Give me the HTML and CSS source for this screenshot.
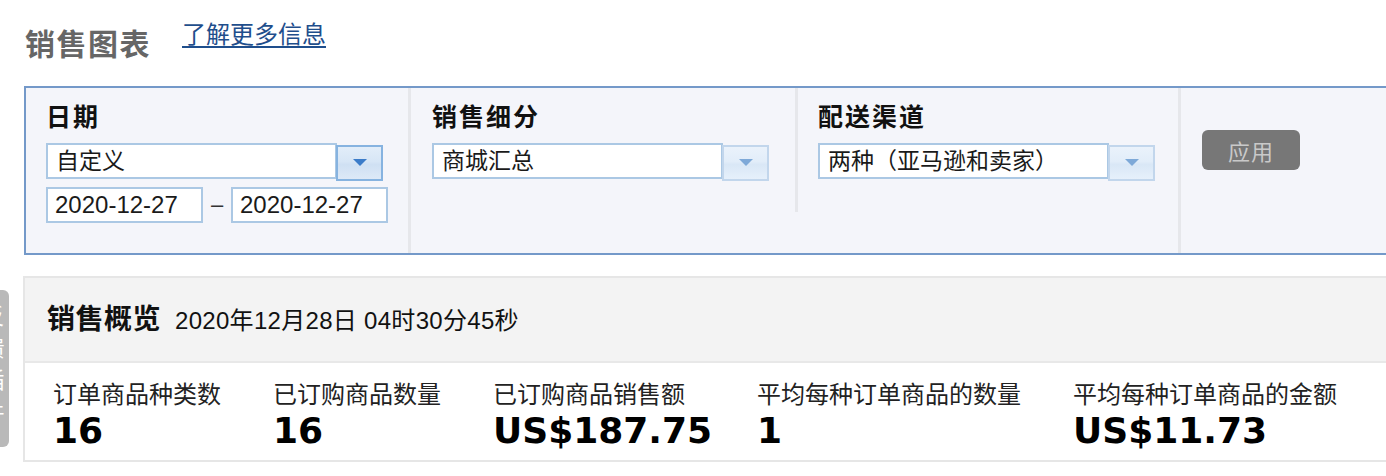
FILE: index.html
```html
<!DOCTYPE html>
<html lang="zh-CN">
<head>
<meta charset="utf-8">
<title>销售图表</title>
<link rel="stylesheet" href="styles.css">
</head>
<body>
<div class="side-tab"><span class="side-text">反馈插件</span></div>
<div class="page">
  <header class="top">
    <h1 class="title">销售图表</h1>
    <a class="more" href="#">了解更多信息</a>
  </header>

  <section class="filters">
    <div class="fcol fcol-date">
      <div class="flabel">日期</div>
      <div class="select active">
        <div class="sel-val">自定义</div>
        <div class="sel-btn"><span class="arrow"></span></div>
      </div>
      <div class="dates">
        <div class="dinput">2020-12-27</div>
        <span class="dash">–</span>
        <div class="dinput">2020-12-27</div>
      </div>
    </div>
    <div class="fcol fcol-seg">
      <div class="flabel">销售细分</div>
      <div class="select">
        <div class="sel-val">商城汇总</div>
        <div class="sel-btn"><span class="arrow"></span></div>
      </div>
    </div>
    <div class="fcol fcol-chan">
      <div class="flabel">配送渠道</div>
      <div class="select">
        <div class="sel-val">两种（亚马逊和卖家）</div>
        <div class="sel-btn"><span class="arrow"></span></div>
      </div>
    </div>
    <div class="fcol fcol-apply">
      <button class="apply" type="button">应用</button>
    </div>
  </section>

  <section class="summary">
    <div class="sum-head">
      <span class="sum-title">销售概览</span>
      <span class="sum-time">2020年12月28日 04时30分45秒</span>
    </div>
    <div class="metrics">
      <div class="metric"><div class="mlabel">订单商品种类数</div><div class="mval">16</div></div>
      <div class="metric"><div class="mlabel">已订购商品数量</div><div class="mval">16</div></div>
      <div class="metric"><div class="mlabel">已订购商品销售额</div><div class="mval">US$187.75</div></div>
      <div class="metric"><div class="mlabel">平均每种订单商品的数量</div><div class="mval">1</div></div>
      <div class="metric"><div class="mlabel">平均每种订单商品的金额</div><div class="mval">US$11.73</div></div>
    </div>
  </section>
</div>
</body>
</html>
```

FILE: styles.css
```css
html, body {
  margin: 0;
  padding: 0;
  overflow: hidden;
  background: #fff;
}
body {
  width: 1386px;
  height: 476px;
  position: relative;
  font-family: "Liberation Sans", "Noto Sans CJK SC", sans-serif;
  color: #111;
}

.side-tab {
  position: absolute;
  left: -22px;
  top: 290px;
  width: 31px;
  height: 157px;
  background: #b9b9b9;
  border-radius: 6px;
  overflow: hidden;
  display: flex;
  align-items: center;
  justify-content: center;
}
.side-text {
  writing-mode: vertical-rl;
  color: #fff;
  font-family: "Noto Sans CJK SC", sans-serif;
  font-size: 22px;
  letter-spacing: 10px;
}

.page {
  width: 1420px;
  padding-left: 24px;
}

.top {
  display: flex;
  align-items: flex-start;
  height: 86px;
}
.title {
  margin: 24px 0 0 1px;
  font-family: "Noto Sans CJK SC", sans-serif;
  font-size: 30px;
  line-height: 36px;
  font-weight: bold;
  color: #666;
  letter-spacing: 1.5px;
}
.more {
  margin: 18px 0 0 31px;
  font-family: "Noto Sans CJK SC", sans-serif;
  font-size: 24px;
  line-height: 29px;
  color: #1f4e8c;
  text-decoration: underline;
  text-decoration-thickness: 2px;
  text-underline-offset: 3px;
}

.filters {
  display: flex;
  align-items: stretch;
  height: 165px;
  border: 2px solid #7499c9;
  border-right: none;
  background: #f4f5fa;
}
.fcol {
  box-sizing: border-box;
  padding: 12px 0 0 20px;
}
.fcol-date {
  width: 385px;
  border-right: 3px solid #e6e7eb;
}
.fcol-seg {
  width: 387px;
  height: 124px;
  align-self: flex-start;
  padding-left: 21px;
  border-right: 3px solid #e6e7eb;
}
.fcol-chan {
  width: 383px;
  border-right: 3px solid #e6e7eb;
}
.fcol-apply {
  padding: 42px 0 0 21px;
}

.flabel {
  font-family: "Noto Sans CJK SC", sans-serif;
  font-size: 25px;
  line-height: 31px;
  font-weight: bold;
  color: #111;
  letter-spacing: 2px;
}

.select {
  display: flex;
  align-items: flex-start;
  margin-top: 12px;
  height: 38px;
}
.sel-val {
  box-sizing: border-box;
  width: 291px;
  height: 36px;
  border: 2px solid #abc8e4;
  background: #fff;
  padding-left: 8px;
  font-family: "Liberation Sans", "Noto Sans CJK SC", sans-serif;
  font-size: 23px;
  line-height: 32px;
  color: #1a1a1a;
  white-space: nowrap;
}
.sel-btn {
  box-sizing: border-box;
  width: 47px;
  height: 36px;
  margin-top: 2px;
  margin-left: -1px;
  border: 2px solid #c2d6ec;
  background: linear-gradient(#eaf2fb 0%, #e2edf9 45%, #d9e7f6 55%, #e6f0fb 100%);
  display: flex;
  align-items: center;
  justify-content: center;
}
.arrow {
  width: 0;
  height: 0;
  border-left: 7px solid transparent;
  border-right: 7px solid transparent;
  border-top: 7px solid #7ea9d8;
  margin-top: -2px;
}
.select.active .sel-btn {
  border-color: #86b3e0;
  background: linear-gradient(#e2edf9 0%, #d7e6f6 45%, #cfe0f3 55%, #dde9f7 100%);
}
.select.active .arrow {
  border-top-color: #3b7cc9;
}

.dates {
  display: flex;
  align-items: center;
  margin-top: 6px;
}
.dinput {
  box-sizing: border-box;
  width: 157px;
  height: 36px;
  border: 2px solid #abc8e4;
  background: #fff;
  padding-left: 7px;
  font-size: 24px;
  line-height: 32px;
  color: #1a1a1a;
}
.dash {
  width: 28px;
  text-align: center;
  font-size: 22px;
  color: #333;
}

.apply {
  width: 98px;
  height: 40px;
  border: none;
  border-radius: 6px;
  background: #777;
  color: #c9c9c9;
  font-family: "Noto Sans CJK SC", sans-serif;
  font-size: 22px;
  line-height: 40px;
  padding: 0;
  letter-spacing: 1px;
}

.summary {
  margin: 21px 0 0 -1px;
  border: 2px solid #e6e6e6;
  border-right: none;
}
.sum-head {
  box-sizing: border-box;
  height: 85px;
  background: #f3f3f3;
  border-bottom: 2px solid #e8e8e8;
  padding: 22px 0 0 22px;
  display: flex;
  align-items: baseline;
}
.sum-title {
  font-family: "Noto Sans CJK SC", sans-serif;
  font-size: 28px;
  line-height: 34px;
  font-weight: bold;
  color: #111;
  letter-spacing: 0.5px;
}
.sum-time {
  margin-left: 14px;
  font-size: 24px;
  letter-spacing: 0.3px;
  color: #111;
}

.metrics {
  display: grid;
  grid-template-columns: 220px 220px 264px 316px auto;
  height: 97px;
  box-sizing: border-box;
  padding: 15px 0 0 28px;
}
.mlabel {
  font-family: "Noto Sans CJK SC", sans-serif;
  font-size: 24px;
  line-height: 29px;
  color: #222;
  white-space: nowrap;
}
.mval {
  margin-top: 4px;
  font-family: "DejaVu Sans", sans-serif;
  font-weight: bold;
  font-size: 36px;
  line-height: 40px;
  color: #000;
  white-space: nowrap;
}
```
